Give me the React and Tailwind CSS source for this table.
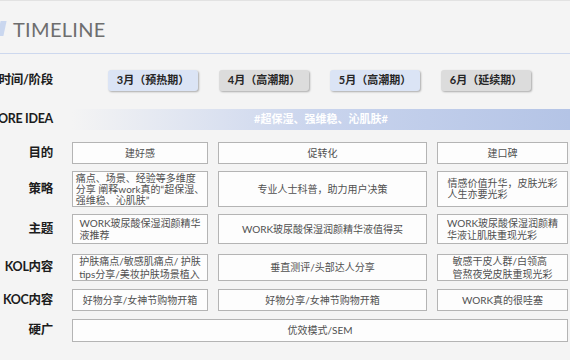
import React from 'react';

const months = [
  { text: '3月（预热期）', bg: 'bg-[#dbe4f5]' },
  { text: '4月（高潮期）', bg: 'bg-[#dcdcdc]' },
  { text: '5月（高潮期）', bg: 'bg-[#dbe4f5]' },
  { text: '6月（延续期）', bg: 'bg-[#dcdcdc]' },
];

const rows = [
  {
    label: '目的',
    h: 'h-[22px]',
    mt: 'mt-[12px]',
    cells: [['建好感'], ['促转化'], ['建口碑']],
  },
  {
    label: '策略',
    h: 'h-[36px]',
    mt: 'mt-[7px]',
    tight: true,
    cells: [
      ['痛点、场景、经验等多维度', '分享 阐释work真的“超保湿、', '强维稳、沁肌肤”'],
      ['专业人士科普，助力用户决策'],
      ['情感价值升华，皮肤光彩', '人生亦要光彩'],
    ],
  },
  {
    label: '主题',
    h: 'h-[30px]',
    mt: 'mt-[7px]',
    cells: [
      ['WORK玻尿酸保湿润颜精华', '液推荐'],
      ['WORK玻尿酸保湿润颜精华液值得买'],
      ['WORK玻尿酸保湿润颜精', '华液让肌肤重现光彩'],
    ],
  },
  {
    label: 'KOL内容',
    h: 'h-[27px]',
    mt: 'mt-[10px]',
    cells: [
      ['护肤痛点/敏感肌痛点/ 护肤', 'tips分享/美妆护肤场景植入'],
      ['垂直测评/头部达人分享'],
      ['敏感干皮人群/白领高', '管熬夜党皮肤重现光彩'],
    ],
  },
  {
    label: 'KOC内容',
    h: 'h-[22px]',
    mt: 'mt-[8px]',
    cells: [['好物分享/女神节购物开箱'], ['好物分享/女神节购物开箱'], ['WORK真的很哇塞']],
  },
];

function Cell({ lines, tight }) {
  return (
    <div className="flex items-center justify-center border border-[#b4b4b4] bg-[#fdfdfd]">
      <div className={`text-left text-[10px] text-[#505050] whitespace-nowrap ${tight ? 'leading-[11px]' : 'leading-[12.5px]'}`}>
        {lines.map((l, i) => (
          <div key={i}>{l}</div>
        ))}
      </div>
    </div>
  );
}

function Label({ children }) {
  return (
    <div className="w-[53px] shrink-0 flex justify-end whitespace-nowrap text-[12.5px] tracking-[-0.3px] font-bold text-[#1c1c1c]">
      {children}
    </div>
  );
}

export default function App() {
  return (
    <div className="w-[570px] h-[360px] overflow-hidden bg-[#f4f4f4] border-t border-[#e2e2e2] font-['Lato','Noto_Sans_CJK_SC',sans-serif]">
      {/* Title */}
      <header className="h-[53px] flex items-center border-b border-[#cdd8ee] pt-[3px]">
        <div className="w-[6px] h-[15px] -ml-[1px] bg-[#cad7ef] -skew-x-12" />
        <span className="ml-[8px] text-[20px] tracking-[0.3px] text-[#6e6e6e] font-['Lato',sans-serif]">
          TIMELINE
        </span>
      </header>

      {/* Months */}
      <div className="mt-[16px] h-[21px] flex items-center">
        <Label>时间/阶段</Label>
        <div className="ml-[55px] flex gap-[21px]">
          {months.map((m) => (
            <div
              key={m.text}
              className={`w-[90px] h-[21px] flex items-center justify-center rounded-[3px] text-[11px] font-bold text-[#262626] shadow-[1px_1px_2px_rgba(0,0,0,0.3)] ${m.bg}`}
            >
              {m.text}
            </div>
          ))}
        </div>
      </div>

      {/* Core idea */}
      <div className="mt-[18px] h-[21px] flex items-center">
        <Label>CORE IDEA</Label>
        <div className="ml-[19px] flex-1 h-full flex items-center justify-center bg-gradient-to-r from-[#f4f4f4] via-[#c9d4ed] to-[#b4c4e6] text-[11px] font-bold text-white">
          #超保湿、强维稳、沁肌肤#
        </div>
      </div>

      {/* Table */}
      {rows.map((r) => (
        <div key={r.label} className={`flex items-center ${r.mt}`}>
          <Label>{r.label}</Label>
          <div className={`ml-[19px] grid grid-cols-[136px_209px_131px] gap-x-[10px] ${r.h}`}>
            {r.cells.map((c, i) => (
              <Cell key={i} lines={c} tight={r.tight} />
            ))}
          </div>
        </div>
      ))}

      <div className="mt-[8px] flex items-center">
        <Label>硬广</Label>
        <div className="ml-[19px] w-[496px] h-[23px] flex items-center justify-center border border-[#b4b4b4] bg-[#fdfdfd] text-[10px] text-[#505050]">
          优效模式/SEM
        </div>
      </div>
    </div>
  );
}
